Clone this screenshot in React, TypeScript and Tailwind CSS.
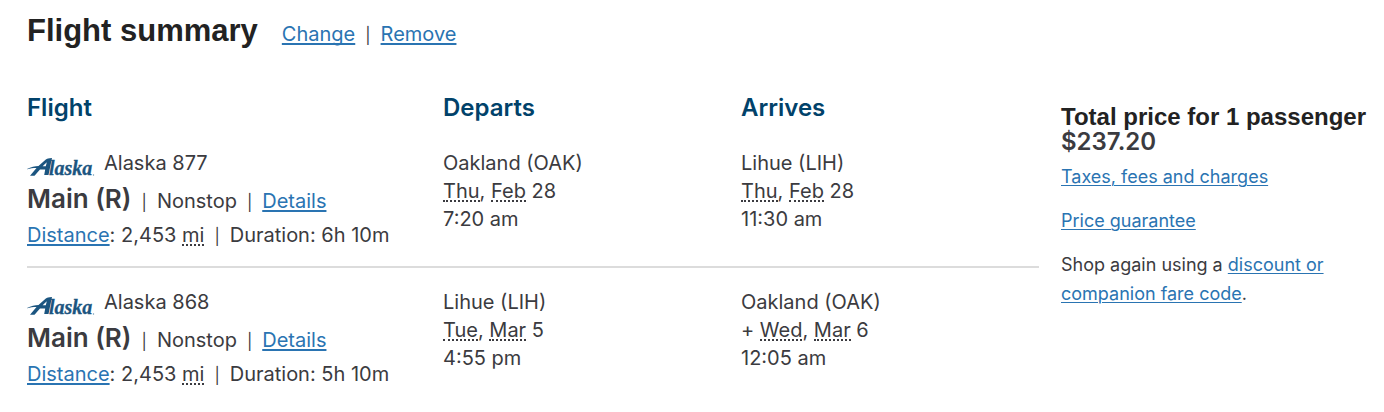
import type { ReactNode } from "react";

type Stop = { place: string; prefix?: string; weekday: string; month: string; day: number; time: string };
type Leg = { number: number; duration: string; departs: Stop; arrives: Stop };

const legs: Leg[] = [
  {
    number: 877,
    duration: "6h 10m",
    departs: { place: "Oakland (OAK)", weekday: "Thu", month: "Feb", day: 28, time: "7:20 am" },
    arrives: { place: "Lihue (LIH)", weekday: "Thu", month: "Feb", day: 28, time: "11:30 am" },
  },
  {
    number: 868,
    duration: "5h 10m",
    departs: { place: "Lihue (LIH)", weekday: "Tue", month: "Mar", day: 5, time: "4:55 pm" },
    arrives: { place: "Oakland (OAK)", prefix: "+ ", weekday: "Wed", month: "Mar", day: 6, time: "12:05 am" },
  },
];

function Link({ children }: { children: ReactNode }) {
  return (
    <a href="#" className="text-[#2a74b2] underline decoration-2 underline-offset-2 [text-decoration-skip-ink:none]">
      {children}
    </a>
  );
}

function SmallLink({ children }: { children: ReactNode }) {
  return (
    <a href="#" className="text-[#2a74b2] underline decoration-1 underline-offset-2">
      {children}
    </a>
  );
}

function Abbr({ title, children }: { title: string; children: ReactNode }) {
  return (
    <abbr title={title} className="inline-block border-b-2 border-dotted border-[#3b3b40] leading-[18px] no-underline">
      {children}
    </abbr>
  );
}

function Pipe() {
  return <span className="text-[16px]">|</span>;
}

function AlaskaLogo() {
  return (
    <svg viewBox="0 -3 68 30" className="h-[30px] w-[68px] shrink-0" role="img" aria-label="Alaska Airlines">
      <path
        d="M0 18 C4 15.800 8 15 11.500 14.900 L18.500 8.800 C20 7.600 21.500 7.200 25 7 L21.500 24 L17.200 24 L18.200 18.400 L13 18.400 L7.500 24.800 L3 24.800 L9.500 17 C6 17 3 17.300 0.300 18.300 Z M15.600 15.300 L18.800 15.300 L19.800 11.300 Z"
        fill="#1b5580"
        fillRule="evenodd"
      />
      <text
        x="22"
        y="24"
        fontSize="20"
        fontWeight="700"
        fontStyle="italic"
        className="font-['Liberation_Serif',serif]"
        fill="#1b5580"
        stroke="#1b5580"
        strokeWidth="0.3"
      >
        laska
      </text>
      <circle cx="66.500" cy="24" r="0.7" fill="#6d93b0" />
    </svg>
  );
}

function StopCell({ stop }: { stop: Stop }) {
  return (
    <td className="pt-1 align-top leading-7">
      <div>{stop.place}</div>
      <div>
        {stop.prefix}
        <Abbr title={stop.weekday}>{stop.weekday}</Abbr>, <Abbr title={stop.month}>{stop.month}</Abbr> {stop.day}
      </div>
      <div>{stop.time}</div>
    </td>
  );
}

function LegRow({ leg }: { leg: Leg }) {
  return (
    <>
      <td className="pb-3 align-top">
        <div className="flex h-9 items-center gap-[9px]">
          <AlaskaLogo />
          <span>Alaska {leg.number}</span>
        </div>
        <div className="flex h-9 items-baseline gap-2.5 leading-9">
          <strong className="text-[26px] font-semibold">Main (R)</strong>
          <Pipe />
          <span>Nonstop</span>
          <Pipe />
          <Link>Details</Link>
        </div>
        <div className="flex items-baseline gap-2.5 leading-9">
          <span>
            <Link>Distance</Link>: 2,453 <Abbr title="miles">mi</Abbr>
          </span>
          <Pipe />
          <span>Duration: {leg.duration}</span>
        </div>
      </td>
      <StopCell stop={leg.departs} />
      <StopCell stop={leg.arrives} />
    </>
  );
}

export default function App() {
  return (
    <main className="bg-white pt-[13px] pl-[27px] font-['Inter','Liberation_Sans',sans-serif] text-[20px] text-[#3b3b40]">
      <header className="flex items-baseline gap-6 leading-9">
        <h1 className="font-['Liberation_Sans',sans-serif] text-[31px] font-bold text-[#222]">Flight summary</h1>
        <nav className="flex items-baseline gap-2.5">
          <Link>Change</Link>
          <Pipe />
          <Link>Remove</Link>
        </nav>
      </header>
      <div className="mt-[39px] flex items-start gap-[22px]">
        <table className="min-w-0 flex-1 table-fixed border-collapse text-left">
          <thead>
            <tr className="h-[53px] align-top text-[24px] leading-8 text-[#01426a]">
              <th className="w-[416px] font-semibold">Flight</th>
              <th className="font-semibold">Departs</th>
              <th className="font-semibold">Arrives</th>
            </tr>
          </thead>
          {legs.map((leg) => (
            <tbody key={leg.number} className="group">
              <tr className="border-b-2 border-[#dcdcdc] group-last:border-b-0">
                <LegRow leg={leg} />
              </tr>
              <tr aria-hidden="true" className="h-[17px] group-last:hidden">
                <td colSpan={3} />
              </tr>
            </tbody>
          ))}
        </table>
        <aside className="w-[323px] shrink-0 pt-3 text-[18px] leading-[29px]">
          <h2 className="font-['Liberation_Sans',sans-serif] text-[24px] leading-[25px] font-bold whitespace-nowrap text-[#222]">
            Total price for 1 passenger
          </h2>
          <p className="text-[24px] leading-[25px] font-semibold">$237.20</p>
          <p className="mt-2">
            <SmallLink>Taxes, fees and charges</SmallLink>
          </p>
          <p className="mt-[15px]">
            <SmallLink>Price guarantee</SmallLink>
          </p>
          <p className="mt-[15px] pr-10">
            Shop again using a <SmallLink>discount or companion fare code</SmallLink>.
          </p>
        </aside>
      </div>
    </main>
  );
}
